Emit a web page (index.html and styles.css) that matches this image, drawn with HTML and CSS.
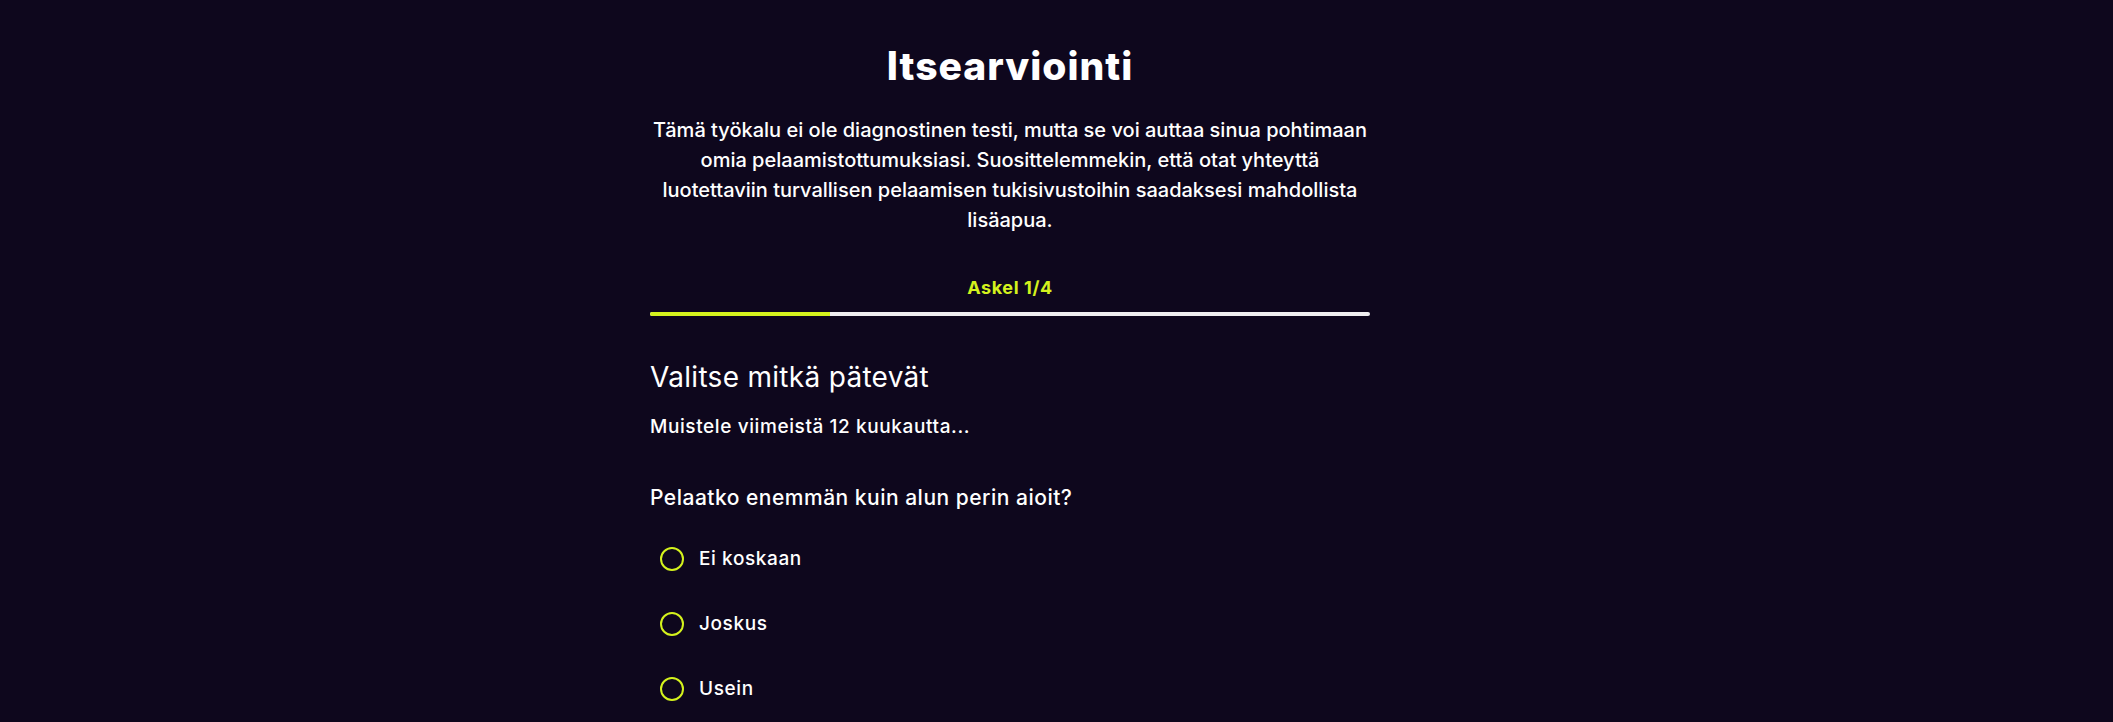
FILE: index.html
```html
<!DOCTYPE html>
<html lang="fi">
<head>
    <meta charset="UTF-8">
    <meta name="viewport" content="width=device-width, initial-scale=1.0">
    <title>Itsearviointi</title>
    <link rel="stylesheet" href="styles.css">
</head>
<body>

    <!-- sivun runko -->
    <main class="page">
        <div class="assessment">

            <h1 class="title">Itsearviointi</h1>
            <p class="intro">Tämä työkalu ei ole diagnostinen testi, mutta se voi auttaa sinua pohtimaan omia pelaamistottumuksiasi. Suosittelemmekin, että otat yhteyttä luotettaviin turvallisen pelaamisen tukisivustoihin saadaksesi mahdollista lisäapua.</p>

            <!-- edistyminen -->
            <div class="progress">
                <span class="progress-label">Askel 1/4</span>
                <div class="progress-track">
                    <div class="progress-fill" style="width: 25%"></div>
                </div>
            </div>

            <h2 class="section-title">Valitse mitkä pätevät</h2>
            <p class="section-hint">Muistele viimeistä 12 kuukautta...</p>

            <!-- kysymys 1 -->
            <fieldset class="question">
                <legend class="question-text">Pelaatko enemmän kuin alun perin aioit?</legend>
                <label class="option">
                    <input type="radio" name="q1" value="never">
                    <span>Ei koskaan</span>
                </label>
                <label class="option">
                    <input type="radio" name="q1" value="sometimes">
                    <span>Joskus</span>
                </label>
                <label class="option">
                    <input type="radio" name="q1" value="often">
                    <span>Usein</span>
                </label>
            </fieldset>

        </div>
    </main>

</body>
</html>
```

FILE: styles.css
```css
/* perusasetukset */
body {
    margin: 0;
    background: #0e071d;
    color: #ffffff;
    font-family: 'Inter', 'Liberation Sans', sans-serif;
}

.page {
    display: flex;
    justify-content: center;
    padding: 43px 93px 0 0;
}

.assessment {
    width: 720px;
}

/* otsikko ja johdanto */
.title {
    margin: 0;
    font-size: 39px;
    line-height: 46px;
    font-weight: 800;
    letter-spacing: 1px;
    text-align: center;
}

.intro {
    margin: 26px 0 0;
    font-size: 20px;
    line-height: 30px;
    font-weight: 500;
    text-align: center;
}

/* edistymispalkki */
.progress {
    margin-top: 43px;
    display: flex;
    flex-direction: column;
    align-items: center;
    gap: 14px;
}

.progress-label {
    font-size: 18px;
    line-height: 20px;
    font-weight: 700;
    letter-spacing: 0.6px;
    color: #d4f21d;
}

.progress-track {
    width: 100%;
    height: 4px;
    border-radius: 2px;
    background: #efeef0;
    overflow: hidden;
}

.progress-fill {
    height: 100%;
    background: #d4f21d;
}

/* osion otsikko */
.section-title {
    margin: 44px 0 0;
    font-size: 28px;
    line-height: 34px;
    font-weight: 400;
    letter-spacing: 0.3px;
}

.section-hint {
    margin: 21px 0 0;
    font-size: 19px;
    line-height: 24px;
    font-weight: 500;
    letter-spacing: 0.6px;
}

/* kysymys ja vaihtoehdot */
.question {
    margin: 46px 0 0;
    padding: 0;
    border: none;
    display: flex;
    flex-direction: column;
    gap: 41px;
}

.question-text {
    padding: 0;
    margin-bottom: 36px;
    font-size: 21px;
    line-height: 26px;
    font-weight: 500;
    letter-spacing: 0.5px;
}

.option {
    display: flex;
    align-items: center;
    gap: 15px;
    padding-left: 10px;
    font-size: 19px;
    line-height: 24px;
    font-weight: 500;
    letter-spacing: 0.6px;
    cursor: pointer;
}

.option input {
    appearance: none;
    -webkit-appearance: none;
    margin: 0;
    width: 24px;
    height: 24px;
    border: 2px solid #d4f21d;
    border-radius: 50%;
    cursor: pointer;
}

.option input:checked {
    background: radial-gradient(circle, #d4f21d 45%, transparent 50%);
}
```
